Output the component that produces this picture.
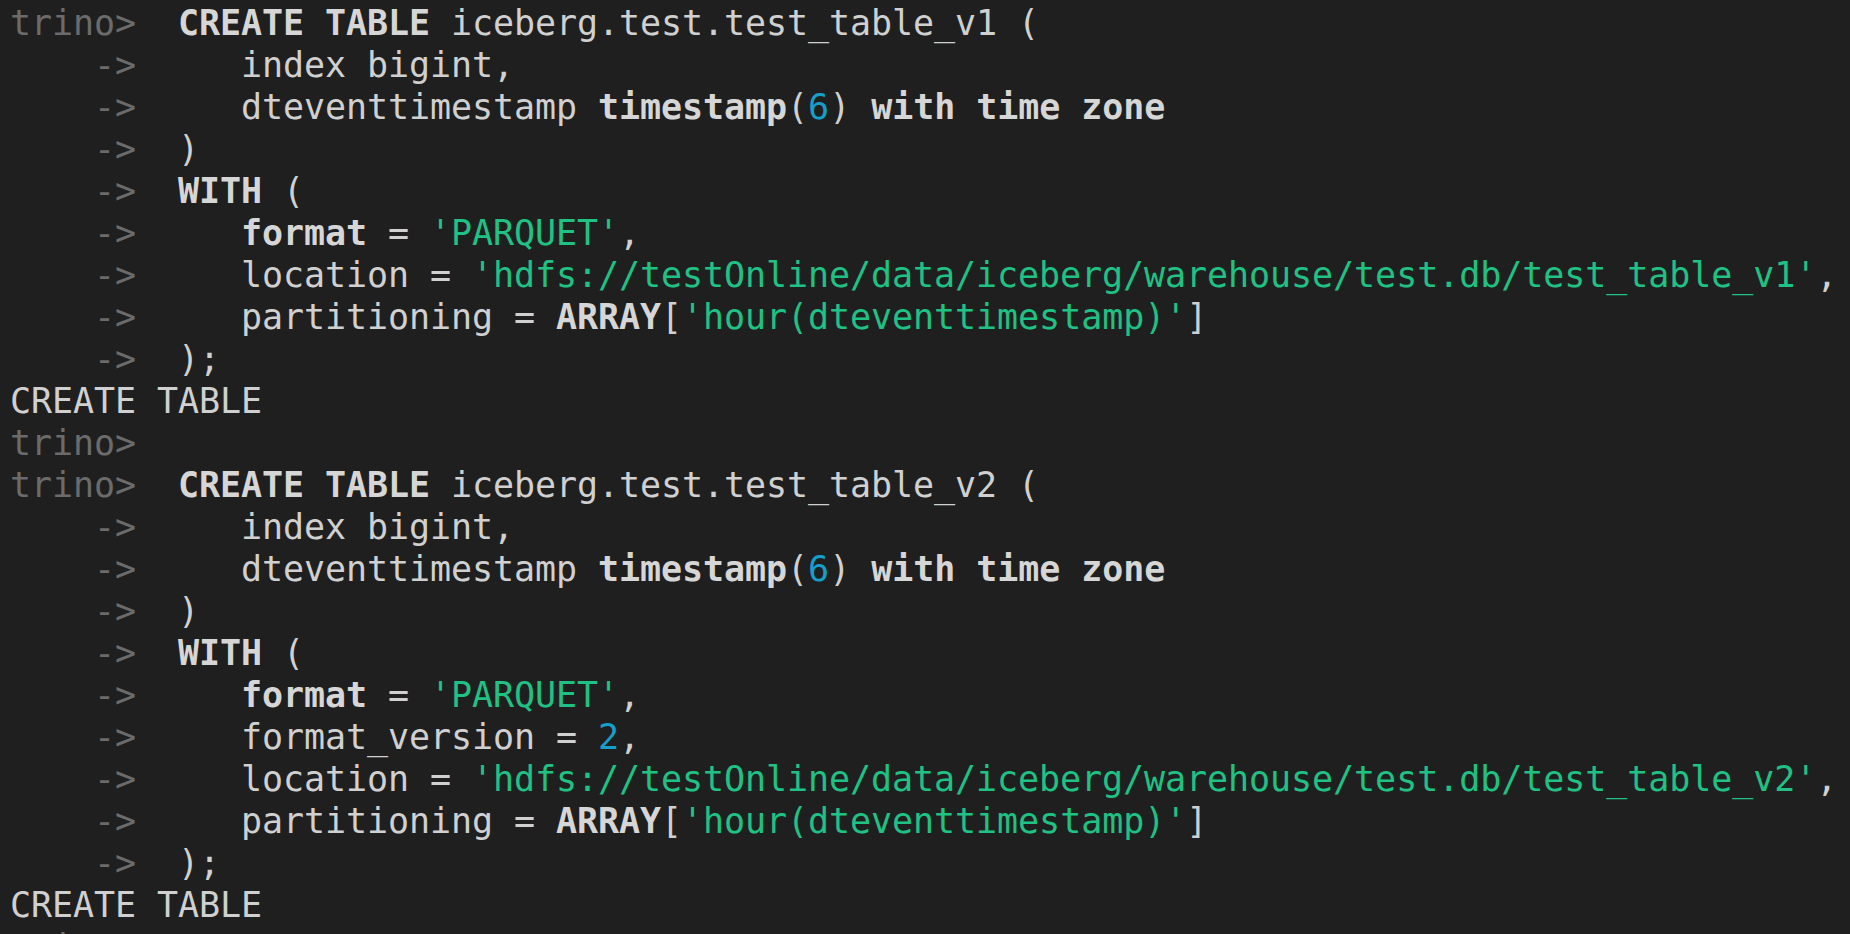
import React from "react";

type Seg = { t: string; c?: "p" | "b" | "g" | "n" };

const P = (t: string): Seg => ({ t, c: "p" });
const B = (t: string): Seg => ({ t, c: "b" });
const G = (t: string): Seg => ({ t, c: "g" });
const N = (t: string): Seg => ({ t, c: "n" });
const T = (t: string): Seg => ({ t });

const cont = P("    ->");

function block(v: string, withVersion: boolean): Seg[][] {
  const lines: Seg[][] = [
    [P("trino>"), T("  "), B("CREATE TABLE"), T(` iceberg.test.test_table_${v} (`)],
    [cont, T("     index bigint,")],
    [cont, T("     dteventtimestamp "), B("timestamp"), T("("), N("6"), T(") "), B("with time zone")],
    [cont, T("  )")],
    [cont, T("  "), B("WITH"), T(" (")],
    [cont, T("     "), B("format"), T(" = "), G("'PARQUET'"), T(",")],
  ];
  if (withVersion) {
    lines.push([cont, T("     format_version = "), N("2"), T(",")]);
  }
  lines.push(
    [cont, T("     location = "), G(`'hdfs://testOnline/data/iceberg/warehouse/test.db/test_table_${v}'`), T(",")],
    [cont, T("     partitioning = "), B("ARRAY"), T("["), G("'hour(dteventtimestamp)'"), T("]")],
    [cont, T("  );")],
    [T("CREATE TABLE")]
  );
  return lines;
}

const allLines: Seg[][] = [
  ...block("v1", false),
  [P("trino>")],
  ...block("v2", true),
  [P("trino>")],
];

function SegView({ s }: { s: Seg }) {
  if (s.c === "p") return <span className="text-[#6b6b6b]">{s.t}</span>;
  if (s.c === "b") return <span className="font-bold text-[#d6d6d6]">{s.t}</span>;
  if (s.c === "g") return <span className="text-[#1fc184]">{s.t}</span>;
  if (s.c === "n") return <span className="text-[#159fcb]">{s.t}</span>;
  return <span>{s.t}</span>;
}

export default function App() {
  return (
    <div className="h-[934px] w-full overflow-hidden bg-[#1f1f1f] pl-[10px] pt-[2px] font-['DejaVu_Sans_Mono',monospace] text-[35px] leading-[42px] tracking-[-0.07px] text-[#d0d0d0]">
      {allLines.map((line, i) => (
        <div key={i} className="whitespace-pre">
          {line.map((s, j) => (
            <SegView key={j} s={s} />
          ))}
        </div>
      ))}
    </div>
  );
}
